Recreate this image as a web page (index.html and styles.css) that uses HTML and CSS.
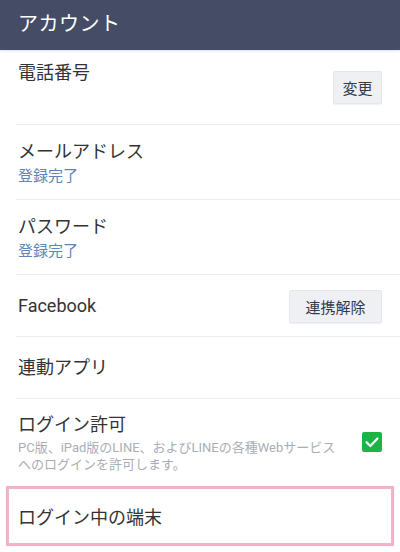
FILE: index.html
```html
<!DOCTYPE html>
<html lang="ja">
<head>
<meta charset="utf-8">
<title>アカウント</title>
<link rel="stylesheet" href="styles.css">
</head>
<body>
<header class="appbar">
  <h1 class="appbar-title">アカウント</h1>
</header>
<main class="list">
  <div class="row row-phone">
    <div class="row-text row-text-top">
      <div class="row-title">電話番号</div>
    </div>
    <button class="btn btn-small">変更</button>
  </div>
  <div class="row row-two">
    <div class="row-text">
      <div class="row-title">メールアドレス</div>
      <div class="row-sub">登録完了</div>
    </div>
  </div>
  <div class="row row-two">
    <div class="row-text">
      <div class="row-title">パスワード</div>
      <div class="row-sub">登録完了</div>
    </div>
  </div>
  <div class="row row-single">
    <div class="row-text">
      <div class="row-title">Facebook</div>
    </div>
    <button class="btn btn-wide">連携解除</button>
  </div>
  <div class="row row-single">
    <div class="row-text">
      <div class="row-title">連動アプリ</div>
    </div>
  </div>
  <div class="row row-login">
    <div class="row-text">
      <div class="row-title">ログイン許可</div>
      <div class="row-desc">PC版、iPad版のLINE、およびLINEの各種Webサービスへのログインを許可します。</div>
    </div>
    <span class="checkbox">
      <svg width="20" height="20" viewBox="0 0 20 20"><path d="M4.5 10.2 L8.3 14 L15.5 6.5" fill="none" stroke="#fff" stroke-width="2.2" stroke-linecap="round" stroke-linejoin="round"/></svg>
    </span>
  </div>
  <div class="row-highlight">
    <div class="row-title">ログイン中の端末</div>
  </div>
</main>
</body>
</html>
```
FILE: styles.css
```css
* { box-sizing: border-box; }
html, body { margin: 0; padding: 0; }
body {
  width: 400px;
  height: 552px;
  overflow: hidden;
  background: #ffffff;
  font-family: Roboto, "Noto Sans CJK JP", sans-serif;
  color: #333333;
}
.appbar {
  height: 50px;
  background: #454d66;
  display: flex;
  align-items: center;
  padding: 0 0 6px 18px;
  box-shadow: 0 1px 2px rgba(0,0,0,0.12);
  position: relative;
}
.appbar-title {
  margin: 0;
  font-size: 20px;
  font-weight: 400;
  color: #ffffff;
  letter-spacing: 0.5px;
}
.list { display: flex; flex-direction: column; }
.row {
  margin-left: 16px;
  padding: 0 18px 0 2px;
  border-bottom: 1px solid #ececec;
  display: flex;
  align-items: center;
  justify-content: space-between;
}
.row-title {
  font-size: 18px;
  line-height: 26px;
  color: #333333;
}
.row-sub {
  font-size: 15px;
  line-height: 22px;
  color: #5e85b6;
}
.row-phone { height: 75px; }
.row-text-top { align-self: flex-start; padding-top: 10px; }
.row-two { height: 75px; align-items: flex-start; padding-top: 14px; }
.row-single { height: 62px; padding-top: 1px; }
.row-login { height: 85px; align-items: flex-start; padding-top: 13px; border-bottom: none; }
.row-login .row-text { width: 328px; }
.row-desc {
  font-size: 13px;
  line-height: 17px;
  color: #a9aeb6;
  margin-top: 1px;
}
.btn {
  font-family: inherit;
  height: 33px;
  border: 1px solid #e4e7ec;
  border-radius: 2px;
  background: #eef0f4;
  color: #333a48;
  font-size: 15px;
  padding: 0;
  box-shadow: 0 1px 1px rgba(0,0,0,0.06);
}
.btn-small { width: 49px; }
.btn-wide { width: 93px; }
.checkbox {
  margin-top: 20px;
  width: 20px;
  height: 20px;
  border-radius: 2px;
  background: #1db447;
  display: flex;
  align-items: center;
  justify-content: center;
  flex-shrink: 0;
}
.checkbox svg { display: block; }
.row-highlight {
  margin: 2px 6px 0 6px;
  height: 60px;
  border: 3px solid #f4b2ca;
  display: flex;
  align-items: center;
  padding: 0 0 0 9px;
}
.row-highlight .row-title { padding-top: 3px; }
```
